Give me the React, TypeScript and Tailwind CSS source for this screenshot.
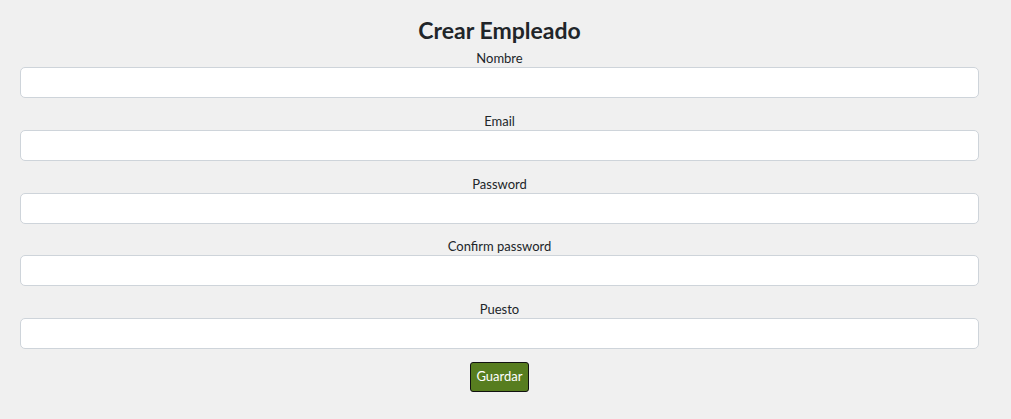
import React from 'react';

const fields = ['Nombre', 'Email', 'Password', 'Confirm password', 'Puesto'];

const App: React.FC = () => {
  return (
    <div className="min-h-[419px] bg-[#f0f0f0] pl-5 pr-8 pt-[15px] font-['Segoe_UI',Lato,sans-serif] text-[#212529]">
      <h1 className="text-center text-[23px] font-bold leading-[30px] text-[#212529]">Crear Empleado</h1>
      <form className="flex flex-col items-center pt-[4px]">
        {fields.map((f) => (
          <div key={f} className="flex w-full flex-col items-center mb-[13.75px] last-of-type:mb-[13px]">
            <label className="text-[13px] leading-[18px]">{f}</label>
            <input
              type={f.toLowerCase().includes('password') ? 'password' : 'text'}
              className="h-[31px] w-full rounded-[5px] border border-[#ced4da] bg-white px-3 outline-none"
            />
          </div>
        ))}
        <button
          type="button"
          className="h-[30px] rounded-[3px] border border-[#111] bg-[#577d1f] px-[5px] text-[13px] text-white"
        >
          Guardar
        </button>
      </form>
    </div>
  );
};

export default App;
